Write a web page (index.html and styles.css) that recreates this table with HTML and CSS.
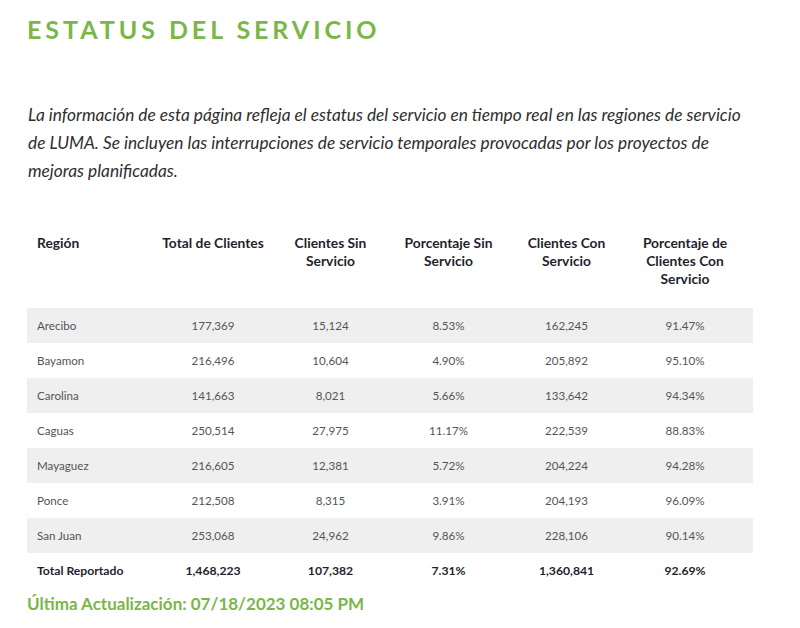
FILE: index.html
```html
<!DOCTYPE html>
<html lang="es">
<head>
<meta charset="utf-8">
<title>Estatus del Servicio</title>
<link rel="stylesheet" href="styles.css">
</head>
<body>
<main class="page">
  <h1 class="title">ESTATUS DEL SERVICIO</h1>
  <p class="intro">La información de esta página refleja el estatus del servicio en tiempo real en las regiones de servicio de LUMA. Se incluyen las interrupciones de servicio temporales provocadas por los proyectos de mejoras planificadas.</p>
  <table class="status">
    <colgroup>
      <col class="c1"><col class="c2"><col class="c3"><col class="c4"><col class="c5"><col class="c6">
    </colgroup>
    <thead>
      <tr>
        <th class="left">Región</th>
        <th>Total de Clientes</th>
        <th>Clientes Sin Servicio</th>
        <th>Porcentaje Sin Servicio</th>
        <th>Clientes Con Servicio</th>
        <th class="last">Porcentaje de Clientes Con Servicio</th>
      </tr>
    </thead>
    <tbody>
      <tr><td class="left">Arecibo</td><td>177,369</td><td>15,124</td><td>8.53%</td><td>162,245</td><td class="last">91.47%</td></tr>
      <tr><td class="left">Bayamon</td><td>216,496</td><td>10,604</td><td>4.90%</td><td>205,892</td><td class="last">95.10%</td></tr>
      <tr><td class="left">Carolina</td><td>141,663</td><td>8,021</td><td>5.66%</td><td>133,642</td><td class="last">94.34%</td></tr>
      <tr><td class="left">Caguas</td><td>250,514</td><td>27,975</td><td>11.17%</td><td>222,539</td><td class="last">88.83%</td></tr>
      <tr><td class="left">Mayaguez</td><td>216,605</td><td>12,381</td><td>5.72%</td><td>204,224</td><td class="last">94.28%</td></tr>
      <tr><td class="left">Ponce</td><td>212,508</td><td>8,315</td><td>3.91%</td><td>204,193</td><td class="last">96.09%</td></tr>
      <tr><td class="left">San Juan</td><td>253,068</td><td>24,962</td><td>9.86%</td><td>228,106</td><td class="last">90.14%</td></tr>
    </tbody>
    <tfoot>
      <tr><td class="left">Total Reportado</td><td>1,468,223</td><td>107,382</td><td>7.31%</td><td>1,360,841</td><td class="last">92.69%</td></tr>
    </tfoot>
  </table>
  <p class="updated">Última Actualización: 07/18/2023 08:05 PM</p>
</main>
</body>
</html>
```

FILE: styles.css
```css
html, body {
  margin: 0;
  padding: 0;
  background: #ffffff;
}

.page {
  padding: 14px 0 0 27px;
  font-family: "Lato", "Liberation Sans", sans-serif;
}

.title {
  margin: 0;
  font-family: "Lato", sans-serif;
  font-weight: 700;
  font-size: 25px;
  line-height: 30px;
  letter-spacing: 3.95px;
  color: #7ab648;
}

.intro {
  margin: 57px 0 0 1px;
  width: 722px;
  font-family: "Lato", sans-serif;
  font-style: italic;
  font-size: 17.3px;
  line-height: 28px;
  color: #2e2e2e;
}

.status {
  margin-top: 49px;
  width: 726px;
  border-collapse: collapse;
  table-layout: fixed;
  font-family: "Lato", sans-serif;
}

.c1 { width: 127px; }
.c2 { width: 118px; }
.c3 { width: 117px; }
.c4 { width: 119px; }
.c5 { width: 117px; }
.c6 { width: 128px; }

.status th {
  vertical-align: top;
  text-align: center;
  font-weight: 700;
  font-size: 13.8px;
  line-height: 18px;
  color: #1f1f2e;
  padding: 0 4px 20px;
}

.status td {
  height: 35px;
  padding: 0 6px;
  text-align: center;
  vertical-align: middle;
  font-size: 11.6px;
  color: #555555;
}

.status .left {
  text-align: left;
  padding-left: 10px;
}

.status .last {
  padding-left: 0;
  padding-right: 8px;
}

.status tbody tr:nth-child(odd) td {
  background: #efefef;
}

.status tfoot td {
  font-weight: 700;
  font-size: 12.2px;
  color: #1f1f2e;
}

.updated {
  margin: 0;
  font-family: "Lato", sans-serif;
  font-weight: 700;
  font-size: 17px;
  line-height: 32px;
  color: #7ab648;
}
```
